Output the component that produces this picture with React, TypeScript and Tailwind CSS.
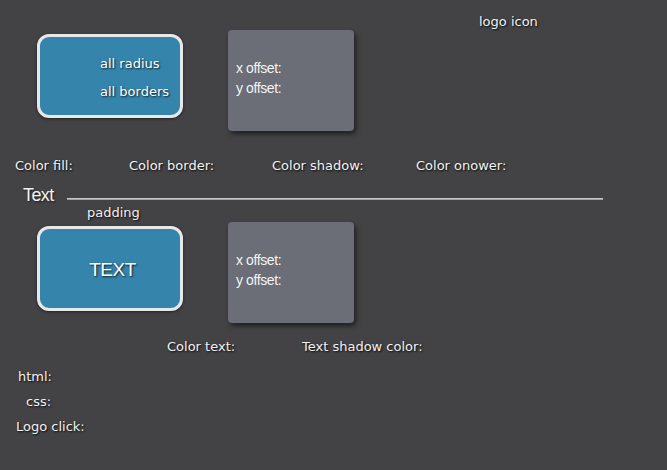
import React from "react";

const lbl = "text-[13px] text-[#f2f2f2] [text-shadow:1px_1px_2px_rgba(0,0,0,0.9)] leading-[16px]";
const font = { fontFamily: '"DejaVu Sans", Verdana, sans-serif' };

function GrayBox({ className }: { className?: string }) {
  return (
    <div
      className={`w-[126px] h-[101px] rounded-[4px] bg-[#6b6e77] shadow-[2px_3px_5px_rgba(0,0,0,0.55)] pl-[8px] pt-[28px] text-[14px] leading-[20px] text-[#f4f4f4] tracking-[-0.4px] ${className ?? ""}`}
      style={{ fontFamily: '"Liberation Sans", Arial, sans-serif' }}
    >
      <div>x offset:</div>
      <div>y offset:</div>
    </div>
  );
}

export default function App() {
  return (
    <div className="w-[667px] h-[470px] bg-[#434345] overflow-hidden" style={font}>
      {/* top row */}
      <div className="flex items-start h-[150px]">
        <div className="ml-[37px] mt-[34px] w-[146px] h-[84px] rounded-[12px] border-[3px] border-[#e6e8ea] bg-[#3584ab] shadow-[0_1px_3px_rgba(0,0,0,0.5)] pl-[60px] pt-[13px] text-[13px] leading-[28px] text-white [text-shadow:1px_1px_2px_rgba(0,0,0,0.8)]">
          <div>all radius</div>
          <div>all borders</div>
        </div>
        <GrayBox className="ml-[45px] mt-[30px]" />
        <div className={`${lbl} ml-[125px] mt-[14px]`}>logo icon</div>
      </div>
      {/* color labels */}
      <div className="flex h-[30px] items-start pt-[8px]">
        <div className={`${lbl} ml-[15px] w-[114px]`}>Color fill:</div>
        <div className={`${lbl} w-[143px]`}>Color border:</div>
        <div className={`${lbl} w-[144px]`}>Color shadow:</div>
        <div className={lbl}>Color onower:</div>
      </div>
      {/* Text heading */}
      <div className="flex items-center h-[22px] mt-[4px]">
        <div
          className="ml-[23px] text-[18px] leading-[22px] text-[#f2f2f2] tracking-[-0.6px] [text-shadow:1px_1px_2px_rgba(0,0,0,0.6)]"
          style={{ fontFamily: '"Liberation Sans", Arial, sans-serif' }}
        >
          Text
        </div>
        <div className="ml-[13px] mt-[8px] w-[536px] h-[2px] bg-gradient-to-b from-[#dcdcdc] to-[#8e8e8e]" />
      </div>
      <div className={`${lbl} ml-[87px] mt-[-1px]`}>padding</div>
      {/* second row */}
      <div className="flex items-start h-[112px] mt-[-1px]">
        <div
          className="ml-[37px] mt-[6px] w-[146px] h-[85px] rounded-[12px] border-[3px] border-[#e6e8ea] bg-[#3584ab] shadow-[0_1px_3px_rgba(0,0,0,0.5)] flex items-center justify-center text-[19px] text-white tracking-[-0.5px] [text-shadow:1px_1px_2px_rgba(0,0,0,0.8)]"
          style={{ fontFamily: '"Liberation Sans", Arial, sans-serif' }}
        >
          <span className="mt-[3px] ml-[5px]">TEXT</span>
        </div>
        <GrayBox className="ml-[45px] mt-[2px]" />
      </div>
      <div className="flex h-[30px] pt-[7px]">
        <div className={`${lbl} ml-[167px] w-[135px]`}>Color text:</div>
        <div className={lbl}>Text shadow color:</div>
      </div>
      <div className={`${lbl} ml-[18px] mt-[7px]`}>html:</div>
      <div className={`${lbl} ml-[26px] mt-[9px]`}>css:</div>
      <div className={`${lbl} ml-[16px] mt-[9px]`}>Logo click:</div>
    </div>
  );
}
